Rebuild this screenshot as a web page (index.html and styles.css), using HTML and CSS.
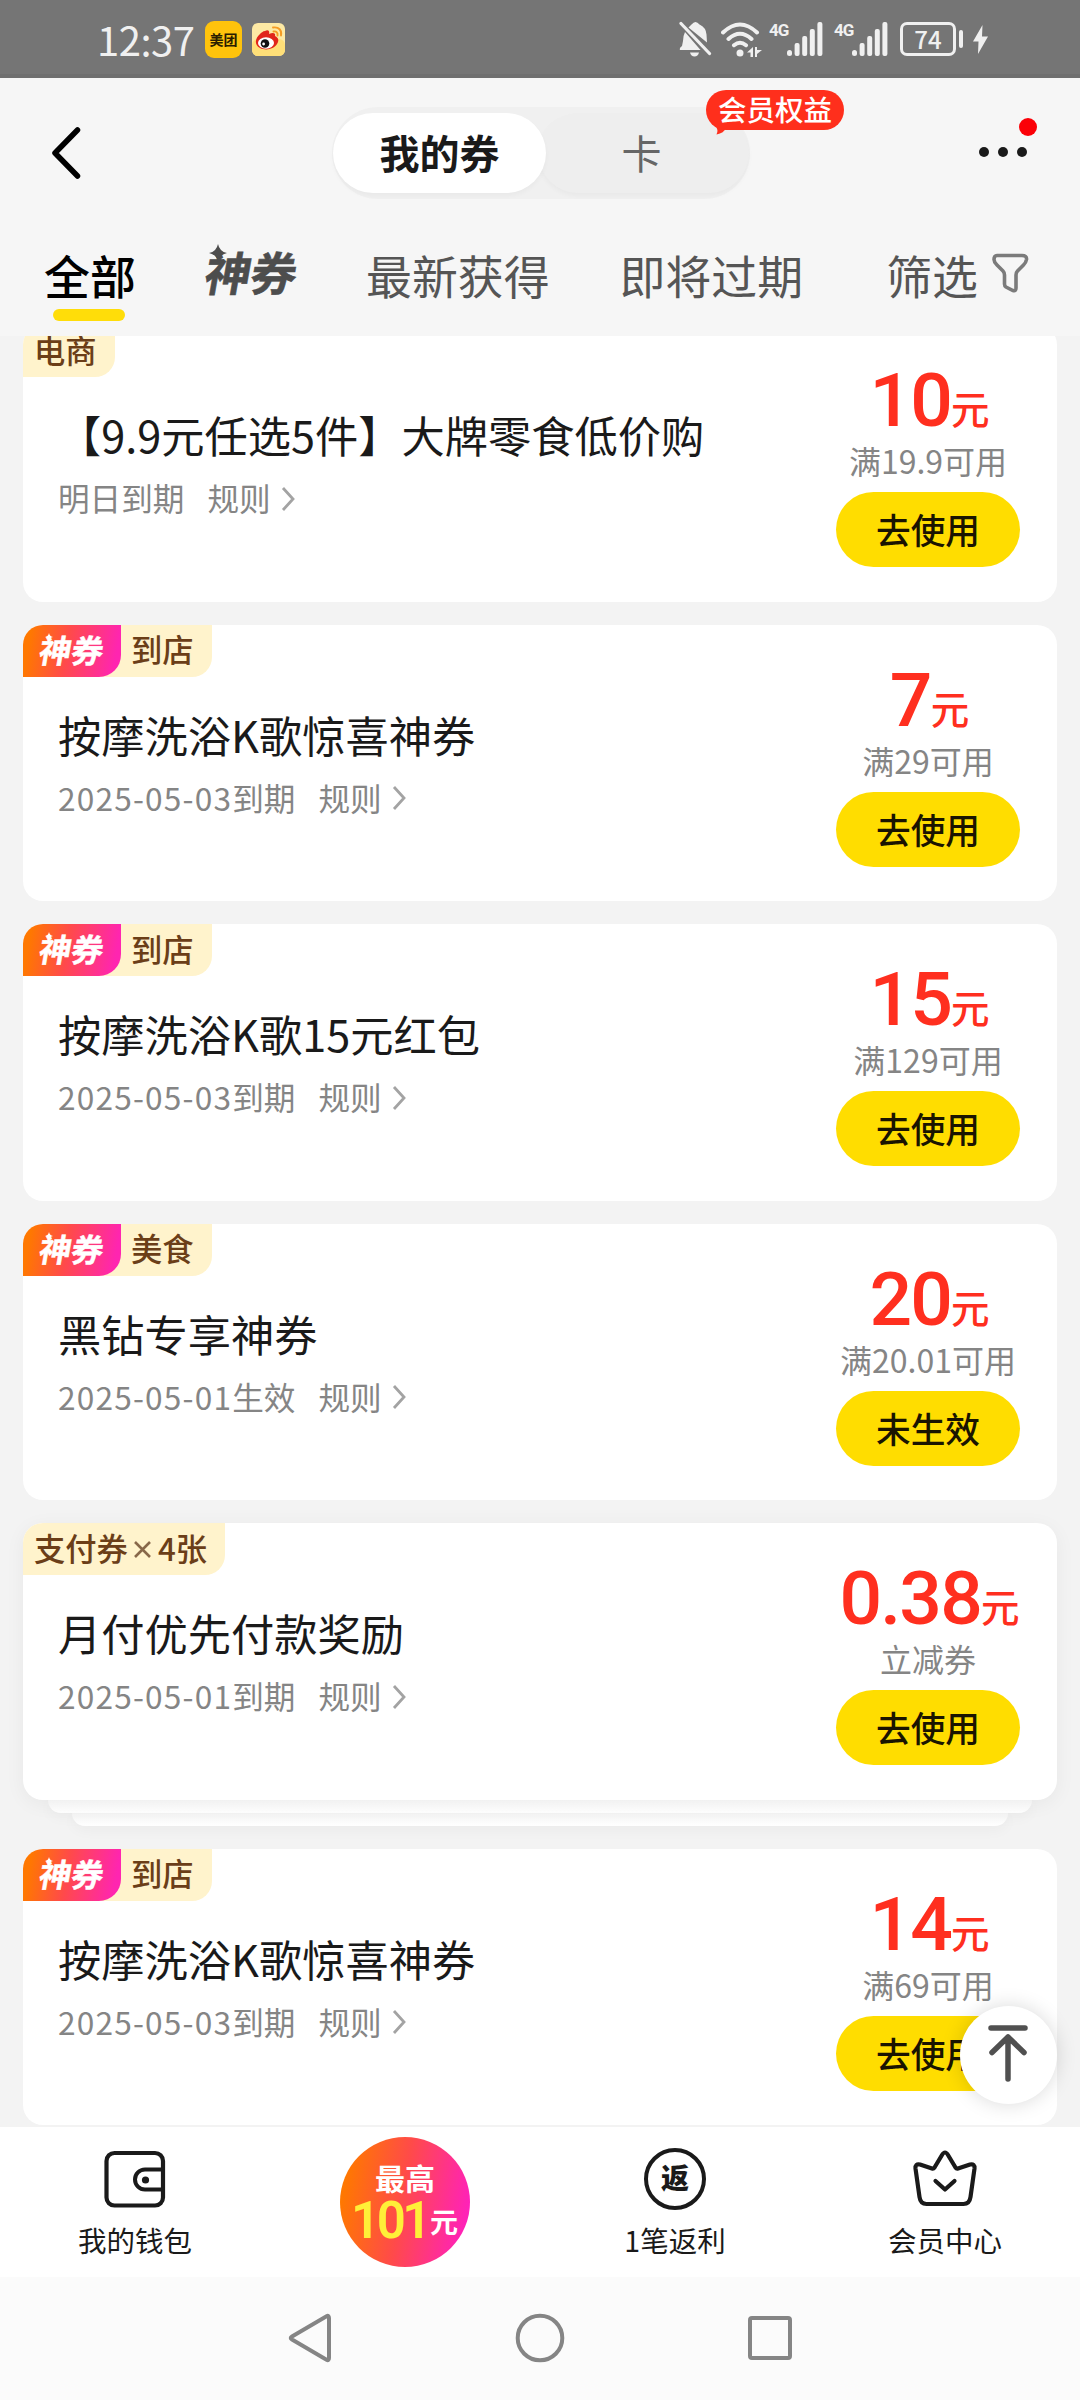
FILE: index.html
```html
<!DOCTYPE html>
<html lang="zh-CN">
<head>
<meta charset="utf-8">
<title>我的券</title>
<link rel="stylesheet" href="styles.css">
</head>
<body>
<svg class="defs" width="0" height="0">
  <symbol id="chev" viewBox="0 0 14 26"><path d="M2 2l10 11L2 24" fill="none" stroke="#a3a3a3" stroke-width="2.8"/></symbol>
  <symbol id="spark" viewBox="0 0 18 18"><path d="M9 0q1.500 7.500 9 9q-7.500 1.500-9 9q-1.500-7.500-9-9q7.500-1.500 9-9z" fill="currentColor"/></symbol>
  <symbol id="bars" viewBox="0 0 36 34"><g fill="#f0f0f0"><rect x="0" y="28" width="5" height="6" rx="2.500"/><rect x="7.600" y="21" width="5" height="13" rx="2"/><rect x="15.200" y="14" width="5" height="20" rx="2"/><rect x="22.800" y="7" width="5" height="27" rx="2"/><rect x="30.400" y="0" width="5" height="34" rx="2"/></g></symbol>
</svg>
<div class="phone">
  <header class="status">
    <span class="time">12:37</span>
    <span class="app-mt">美团</span>
    <svg class="app-wb" width="33" height="33" viewBox="0 0 33 33">
      <rect width="33" height="33" rx="6" fill="#fde9a4"/><rect y="16" width="33" height="17" rx="6" fill="#ffdf78"/>
      <path d="M13 8c3-2 5 0 4 3c4-2 7-1 6 2c4 2 4 5 2 8c-3 5-11 7-17 4c-6-3-5-10 0-14c1-1 3-3 5-3z" fill="#e1251b"/>
      <ellipse cx="14" cy="20" rx="8" ry="5.800" fill="#fff"/><circle cx="13" cy="20.500" r="4.300" fill="#111"/><circle cx="11.600" cy="21" r="1.400" fill="#fff"/>
      <path d="M21 4.500c6-1 9 3 8 8M21.500 8.500c3-.5 4.500 1.500 4 4" fill="none" stroke="#f59b23" stroke-width="1.900" stroke-linecap="round"/>
    </svg>
    <div class="status-right">
      <svg class="bell" width="33" height="36" viewBox="0 0 33 36">
        <path d="M6 11Q4 15 4 20l-1 5q-3 2-2 4h20.500zM9.500 6.500l3-3q4-5 8 0q6.500 3 7 10l.5 8z" fill="#f0f0f0"/>
        <path d="M2 2.500L30.500 32.500" stroke="#f0f0f0" stroke-width="3.200" stroke-linecap="round"/><path d="M11 31.500h9q-1 4-4.500 4t-4.500-4z" fill="#f0f0f0"/>
      </svg>
      <svg class="wifi" width="41" height="35" viewBox="0 0 41 35">
        <g fill="none" stroke="#f0f0f0" stroke-width="4" stroke-linecap="round"><path d="M2 10.500Q19 -5.500 36 10.500M7.500 17Q19 6.500 30.500 17M13 23.200q6-5 12 0"/></g>
        <circle cx="19" cy="31" r="3.500" fill="#f0f0f0"/><path d="M26 30.500l6-5.500v10h-2.500v-4.500zM34 25v10h2v-3l5-4h-5v-3z" fill="#f0f0f0"/>
      </svg>
      <span class="g4">4G</span><svg class="bars" width="36" height="34"><use href="#bars"/></svg>
      <span class="g4">4G</span><svg class="bars b2" width="36" height="34"><use href="#bars"/></svg>
      <span class="battery">74</span><span class="cap"></span>
      <svg class="bolt" width="15" height="29" viewBox="0 0 15 29"><path d="M9.500 0L0 16.500h5.500L5 29l10-17.500H9z" fill="#f0f0f0"/></svg>
    </div>
  </header>

  <nav class="titlebar">
    <svg class="back" width="32" height="54" viewBox="0 0 32 54"><path d="M27.500 4L5 27l22.500 23" fill="none" stroke="#000" stroke-width="5.500" stroke-linecap="round" stroke-linejoin="round"/></svg>
    <div class="segment">
      <span class="seg on">我的券</span><span class="seg">卡</span>
      <span class="bubble">会员权益<svg width="16" height="10" viewBox="0 0 16 10"><path d="M0 0Q4 5 1.500 9.500Q9 8 11 3L16 0z" fill="#ff2f1c"/></svg></span>
    </div>
    <div class="more"><i></i><i></i><i></i><b></b></div>
  </nav>

  <nav class="tabs">
    <span class="tab active">全部</span>
    <span class="tab logo"><svg width="18" height="18"><use href="#spark"/></svg><em>神券</em></span>
    <span class="tab recent">最新获得</span>
    <span class="tab expiring">即将过期</span>
    <span class="tab filter">筛选<svg width="38" height="42" viewBox="0 0 38 42"><path d="M6 3.500H31q5 0 4.500 4q-.5 3-3 5.500l-6 6q-1.500 1.500-1.500 4V36q0 3.500-3 2.500l-7-3.500q-1.500-1-1.500-3V23q0-2.500-1.500-4L6 13q-3-3-3-5.500q0-4 3-4z" fill="none" stroke="#7b7b7b" stroke-width="3.600"/></svg></span>
  </nav>

  <main class="list">
    <article class="card">
      <div class="tags"><span class="tag">电商</span></div>
      <div class="info"><h2 class="promo">【9.9元任选5件】大牌零食低价购</h2><p><span>明日到期</span><span>规则</span><svg width="14" height="26"><use href="#chev"/></svg></p></div>
      <div class="side"><div class="amount"><b>10</b><span>元</span></div><small>满19.9可用</small><button>去使用</button></div>
    </article>
    <article class="card">
      <div class="tags"><span class="hot"><svg width="8" height="8"><use href="#spark"/></svg><em>神券</em></span><span class="tag">到店</span></div>
      <div class="info"><h2>按摩洗浴K歌惊喜神券</h2><p><span><i>2025-05-03</i>到期</span><span>规则</span><svg width="14" height="26"><use href="#chev"/></svg></p></div>
      <div class="side"><div class="amount"><b>7</b><span>元</span></div><small>满29可用</small><button>去使用</button></div>
    </article>
    <article class="card">
      <div class="tags"><span class="hot"><svg width="8" height="8"><use href="#spark"/></svg><em>神券</em></span><span class="tag">到店</span></div>
      <div class="info"><h2>按摩洗浴K歌15元红包</h2><p><span><i>2025-05-03</i>到期</span><span>规则</span><svg width="14" height="26"><use href="#chev"/></svg></p></div>
      <div class="side"><div class="amount"><b>15</b><span>元</span></div><small>满129可用</small><button>去使用</button></div>
    </article>
    <article class="card">
      <div class="tags"><span class="hot"><svg width="8" height="8"><use href="#spark"/></svg><em>神券</em></span><span class="tag">美食</span></div>
      <div class="info"><h2>黑钻专享神券</h2><p><span><i>2025-05-01</i>生效</span><span>规则</span><svg width="14" height="26"><use href="#chev"/></svg></p></div>
      <div class="side"><div class="amount"><b>20</b><span>元</span></div><small>满20.01可用</small><button>未生效</button></div>
    </article>
    <div class="stack">
      <article class="card">
        <div class="tags"><span class="tag">支付券<svg width="19" height="19" viewBox="0 0 19 19"><path d="M2 2l15 15M17 2L2 17" stroke="#88684a" stroke-width="2.600"/></svg>4张</span></div>
        <div class="info"><h2>月付优先付款奖励</h2><p><span><i>2025-05-01</i>到期</span><span>规则</span><svg width="14" height="26"><use href="#chev"/></svg></p></div>
        <div class="side"><div class="amount"><b>0.38</b><span>元</span></div><small>立减券</small><button>去使用</button></div>
      </article>
      <div class="under u1"></div><div class="under u2"></div>
    </div>
    <article class="card">
      <div class="tags"><span class="hot"><svg width="8" height="8"><use href="#spark"/></svg><em>神券</em></span><span class="tag">到店</span></div>
      <div class="info"><h2>按摩洗浴K歌惊喜神券</h2><p><span><i>2025-05-03</i>到期</span><span>规则</span><svg width="14" height="26"><use href="#chev"/></svg></p></div>
      <div class="side"><div class="amount"><b>14</b><span>元</span></div><small>满69可用</small><button>去使用</button></div>
    </article>
    <div class="totop"><svg width="42" height="60" viewBox="0 0 42 60"><path d="M4 5H38M21 14V56M5 29.500L21 14L37 29.500" fill="none" stroke="#505050" stroke-width="5.500" stroke-linecap="round" stroke-linejoin="round"/></svg></div>
  </main>

  <footer class="bottom">
    <div class="item"><svg width="62" height="62" viewBox="0 0 62 62"><rect x="2.500" y="5" width="56.500" height="52.500" rx="8" fill="none" stroke="#1a1a1a" stroke-width="4.200"/><path d="M58 21.500H41a10 10 0 0 0 0 20H58" fill="none" stroke="#1a1a1a" stroke-width="4"/><circle cx="41.500" cy="32" r="3.600" fill="#1a1a1a"/></svg><span>我的钱包</span></div>
    <div class="item"><div class="prize"><span>最高</span><div><b>101</b><i>元</i></div></div></div>
    <div class="item"><div class="coin">返</div><span>1笔返利</span></div>
    <div class="item"><svg width="64" height="62" viewBox="0 0 64 62"><path d="M7 16.500L19 20.500Q20.500 21 21.500 19.500L29 7q3-5 6 0l7.500 12.500q1 1.500 2.500 1L57 16.500q5-1 4.500 4L57.500 49q-1 7-7 7h-37q-6 0-7-7L2.500 20.500q-.5-5 4.500-4zM22.500 33L32 41.500L41.500 33" fill="none" stroke="#1a1a1a" stroke-width="4.200" stroke-linecap="round" stroke-linejoin="round"/></svg><span>会员中心</span></div>
  </footer>
  <div class="sysnav">
    <svg width="44" height="50" viewBox="0 0 44 50"><path d="M38.500 3.200Q41 2 41 5V45q0 3-2.500 1.800L4 26.500q-2.500-1.500 0-3z" fill="none" stroke="#858585" stroke-width="4"/></svg>
    <svg width="50" height="50" viewBox="0 0 50 50"><circle cx="25" cy="25" r="22.300" fill="none" stroke="#858585" stroke-width="4"/></svg>
    <svg width="44" height="50" viewBox="0 0 44 50"><rect x="2" y="5" width="40" height="40" rx="2" fill="none" stroke="#858585" stroke-width="4"/></svg>
  </div>
</div>
</body>
</html>
```

FILE: styles.css
```css
* { box-sizing: border-box; margin: 0; padding: 0; }
body { font-family: "Noto Sans CJK SC", sans-serif; background: #f3f3f3; color: #1a1a1a; }
svg { display: block; flex: none; }
span, b { white-space: nowrap; }
em, i { font-style: normal; }
.defs { position: absolute; }
.phone { width: 1080px; height: 2400px; display: flex; flex-direction: column; overflow: hidden; }

.status { height: 78px; flex: none; background: #757575; border-bottom: 4px solid #6f6f6f; display: flex; align-items: center; padding: 4px 92px 0 97px; color: #f0f0f0; }
.time { width: 108px; font-size: 40px; line-height: 50px; letter-spacing: -.5px; }
.app-mt { width: 37px; height: 37px; border-radius: 9px; background: #ffc30c; color: #2b1d00; font-size: 14px; font-weight: 700; line-height: 36px; text-align: center; }
.app-wb { margin-left: 10px; }
.status-right { margin-left: auto; display: flex; align-items: center; }
.wifi { margin: 0 7px 0 9px; }
.g4 { width: 18px; height: 34px; font: 700 17px/17px "Roboto", sans-serif; letter-spacing: -1px; }
.bars { margin-right: 11px; }
.bars.b2 { margin-right: 12px; }
.battery { width: 56px; height: 34px; border: 3px solid #f0f0f0; border-radius: 7px; font-size: 24px; line-height: 27px; text-align: center; font-weight: 500; }
.cap { width: 4px; height: 18px; border-radius: 2px; background: #f0f0f0; margin: 0 10px 0 3px; }

.titlebar { height: 150px; flex: none; background: #f6f6f6; display: flex; align-items: center; padding: 0 53px 0 50px; }
.segment { position: relative; width: 418px; height: 92px; margin-left: 250px; border-radius: 46px; background: #f0f0f0; display: flex; align-items: center; padding: 0 1px; }
.seg { flex: 1; height: 80px; border-radius: 40px; background: #eee; font-size: 40px; line-height: 79px; text-align: center; color: #666; box-shadow: 0 3px 5px #00000008; margin-left: -8px; padding-right: 4px; }
.seg.on { position: relative; z-index: 1; flex: 0 0 213px; margin: 0; padding: 0; background: #fff; color: #1a1a1a; font-weight: 700; }
.bubble { position: absolute; z-index: 2; left: 374px; top: -17px; width: 138px; height: 40px; border-radius: 20px; background: #ff2f1c; color: #fff; font-size: 28.500px; line-height: 38px; font-weight: 500; text-align: center; }
.bubble svg { position: absolute; left: 9px; top: 35px; }
.more { position: relative; margin-left: auto; display: flex; gap: 9px; margin-top: -2px; }
.more i { width: 10px; height: 10px; border-radius: 50%; background: #1a1a1a; }
.more b { position: absolute; right: -10px; top: -29px; width: 18px; height: 18px; border-radius: 50%; background: #fb0007; }

.tabs { height: 108px; flex: none; background: #f6f6f6; display: flex; align-items: flex-start; padding: 17px 51px 0 44px; }
.tab { font-size: 45.900px; line-height: 58px; color: #555; }
.tab.active { width: 92px; color: #000; font-weight: 500; }
.tab.active::after { content: ""; display: block; width: 72px; height: 12px; border-radius: 6px; background: #ffdd09; margin: 6px 0 0 9px; }
.tab.logo { position: relative; width: 92px; margin-left: 70px; }
.tab.logo em { display: block; font-size: 46px; font-weight: 700; line-height: 53px; letter-spacing: -.5px; transform: skewX(-10deg); color: #4d4d4d; -webkit-text-stroke: .6px #4d4d4d; }
.tab.logo svg { position: absolute; left: 3px; top: -1px; color: #4d4d4d; z-index: 1; }
.recent { margin-left: 68px; }
.expiring { margin-left: 70px; }
.filter { margin-left: auto; display: flex; }
.filter svg { margin: 7px 0 0 13px; }

.list { position: relative; height: 1791px; flex: none; overflow: hidden; background: #f3f3f3; padding: 0 23px; display: flex; flex-direction: column; gap: 23px; }
.list > .card:first-child { margin-top: -11px; }
.card { position: relative; height: 276.500px; flex: none; border-radius: 20px; background: #fff; overflow: hidden; display: grid; grid-template: 52px 1fr / 1fr 184px; padding-right: 37px; }
.tags { grid-area: 1 / 1; display: flex; }
.tag { height: 52px; padding: 0 18px 3px 11px; background: #fff3cc; border-radius: 0 0 20px 0; color: #6b3e18; font-size: 31.300px; font-weight: 500; line-height: 40px; display: flex; align-items: center; }
.tag svg { margin: 3px 6px 0 5px; }
.hot { position: relative; width: 98px; height: 52px; z-index: 1; border-radius: 0 0 22px 0; color: #fff; background: linear-gradient(100deg, #ff7800 8%, #ff4a4a 45%, #ff25b0 92%); }
.hot em { display: block; margin-left: 17px; font-size: 32px; font-weight: 700; line-height: 49px; transform: skewX(-10deg); -webkit-text-stroke: .5px #fff; }
.hot svg { position: absolute; left: 22px; top: 8px; }
.hot + .tag { margin-left: -20px; padding-left: 30px; }
.info { grid-area: 2 / 1; padding: 27px 0 0 35px; }
.info h2 { font-size: 43.250px; font-weight: 400; line-height: 60px; white-space: nowrap; }
.info p { margin-top: 11px; display: flex; align-items: center; font-size: 31.600px; line-height: 45px; color: #858585; }
.info p span + span { margin-left: 23px; }
.info p svg { margin: 2px 0 0 10px; }
.info i { letter-spacing: 1.200px; }
.side { grid-area: 1 / 2 / 3 / 3; padding-top: 35px; display: flex; flex-direction: column; align-items: center; }
.amount { height: 80px; display: flex; align-items: baseline; color: #ff2f1f; margin-left: 3px; }
.amount b { font: 500 75px/80px "Roboto", sans-serif; letter-spacing: -1.800px; }
.amount span { font-size: 38.500px; line-height: 40px; font-weight: 500; transform: translateY(-2px); }
.side small { font-size: 32px; line-height: 40px; color: #858585; white-space: nowrap; }
.side button { width: 184px; height: 75px; margin-top: 12px; border: 0; border-radius: 38px; background: #ffdd00; color: #1a1400; font: 500 34.700px/75px "Noto Sans CJK SC", sans-serif; }
.stack .card { z-index: 2; box-shadow: 0 4px 20px #0000000d; }
.under { height: 13px; position: relative; background: linear-gradient(#f9f9f9, #fff); border-radius: 0 0 24px 24px; box-shadow: 0 4px 14px #0000000a; }
.u1 { margin: 0 25px; z-index: 1; }
.u2 { margin: 0 49px; }
.totop { position: absolute; left: 960px; top: 1670px; width: 97px; height: 98px; border-radius: 50%; background: #fff; box-shadow: 0 0 20px #00000026; display: flex; justify-content: center; padding: 17px 2px 0 0; }

.bottom { height: 150px; flex: none; background: #fff; display: grid; grid-template-columns: repeat(4, 1fr); }
.item { display: flex; flex-direction: column; align-items: center; padding-top: 21px; font-size: 28.500px; line-height: 40px; }
.item > svg, .coin { margin-bottom: 10px; }
.prize { width: 130px; height: 130px; margin-top: -11px; border-radius: 50%; background: linear-gradient(100deg, #ff7800 8%, #ff4a4a 48%, #ff22b8 92%); color: #fff; text-align: center; padding-top: 23px; font-size: 30px; font-weight: 700; line-height: 36px; display: flex; flex-direction: column; align-items: center; }
.prize > span { transform: translateY(-1px); }
.prize div { display: flex; align-items: baseline; height: 50px; margin-left: -1px; }
.prize b { font: 600 51px/50px "Roboto", sans-serif; color: #ffef38; letter-spacing: -3.500px; }
.prize i { font-size: 28px; line-height: 30px; margin-left: 2px; transform: translateY(-5px); }
.coin { width: 62px; height: 62px; border: 4.500px solid #1a1a1a; border-radius: 50%; font-size: 28px; font-weight: 900; line-height: 51px; text-align: center; }
.sysnav { flex: 1; background: #fbfbfb; display: flex; justify-content: center; align-items: center; gap: 183px; padding-bottom: 2px; }
```
